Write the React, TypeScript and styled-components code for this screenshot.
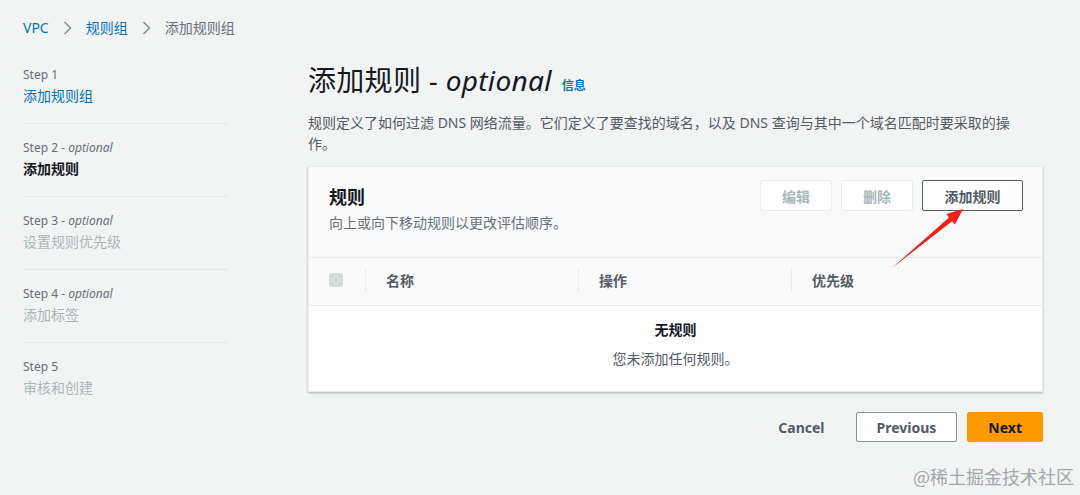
import styled, { createGlobalStyle } from "styled-components";

const GlobalStyle = createGlobalStyle`
    html, body {
        margin: 0;
        padding: 0;
        background: #f2f3f3;
    }
    body {
        font-family: "Noto Sans", "Noto Sans CJK SC", sans-serif;
        color: #16191f;
    }
    * {
        box-sizing: border-box;
    }
`;

const Page = styled.div`
    position: relative;
    width: 1080px;
    height: 495px;
    padding: 18px 0 0 23px;
    overflow: hidden;
`;

const Breadcrumbs = styled.nav`
    display: flex;
    align-items: center;
    gap: 14px;
    height: 20px;
    font-size: 14px;
    line-height: 20px;
`;

const Crumb = styled.span<{ $current?: boolean }>`
    color: ${(p) => (p.$current ? "#687078" : "#0073bb")};
`;

const Layout = styled.div`
    display: grid;
    grid-template-columns: 205px 735px;
    column-gap: 80px;
`;

const SideNav = styled.ul`
    list-style: none;
    margin: 29px 0 0;
    padding: 0;
`;

const NavItem = styled.li`
    padding: 0 0 17px;
    margin-bottom: 16px;
    border-bottom: 1px solid #e4e7e7;
    &:last-child {
        border-bottom: none;
    }
`;

const StepLabel = styled.div`
    font-size: 12px;
    line-height: 16px;
    color: #687078;
    em {
        font-style: italic;
    }
`;

const StepName = styled.div<{ $state: "done" | "active" | "disabled" }>`
    margin-top: 3px;
    font-size: 14px;
    line-height: 20px;
    font-weight: ${(p) => (p.$state === "active" ? 700 : 400)};
    color: ${(p) =>
        p.$state === "done"
            ? "#0073bb"
            : p.$state === "active"
            ? "#16191f"
            : "#aab7b8"};
`;

const Main = styled.main`
    padding-top: 24px;
`;

const Title = styled.h1`
    margin: 0;
    font-size: 28px;
    line-height: 36px;
    font-weight: 400;
    color: #16191f;
    letter-spacing: 0.3px;
    em {
        font-style: italic;
    }
`;

const InfoLink = styled.span`
    margin-left: 10px;
    font-size: 12px;
    font-weight: 700;
    color: #0073bb;
    letter-spacing: 0;
    vertical-align: 1px;
`;

const Description = styled.p`
    margin: 8px 0 0;
    max-width: 726px;
    font-size: 14px;
    line-height: 21px;
    color: #545b64;
`;

const Card = styled.section`
    margin-top: 12px;
    background: #fff;
    border: 1px solid #eaeded;
    box-shadow: 0 1px 2px rgba(0, 28, 36, 0.3);
`;

const CardHeader = styled.div`
    display: flex;
    justify-content: space-between;
    align-items: flex-start;
    padding: 13px 19px 24px 20px;
    background: #fafafa;
    border-bottom: 1px solid #eaeded;
`;

const CardTitle = styled.h2`
    margin: 5px 0 0;
    font-size: 18px;
    line-height: 24px;
    font-weight: 700;
    color: #16191f;
`;

const CardSubtitle = styled.div`
    margin-top: 4px;
    font-size: 14px;
    line-height: 20px;
    color: #687078;
`;

const Actions = styled.div`
    display: flex;
    gap: 9px;
`;

const Button = styled.button<{ $disabled?: boolean; $width: number }>`
    width: ${(p) => p.$width}px;
    height: 31px;
    padding: 0;
    border-radius: 2px;
    background: #fff;
    font-family: inherit;
    font-size: 14px;
    font-weight: 700;
    border: 1px solid ${(p) => (p.$disabled ? "#eaeded" : "#545b64")};
    color: ${(p) => (p.$disabled ? "#aab7b8" : "#545b64")};
`;

const TableHead = styled.div`
    display: grid;
    grid-template-columns: 56px 213px 213px 1fr;
    align-items: center;
    height: 48px;
    background: #fafafa;
    border-bottom: 1px solid #eaeded;
`;

const HeadCell = styled.div<{ $first?: boolean }>`
    position: relative;
    height: 100%;
    display: flex;
    align-items: center;
    padding: 0 0 3px ${(p) => (p.$first ? "20px" : "21px")};
    font-size: 14px;
    font-weight: 700;
    color: #545b64;
    &::before {
        content: "";
        display: ${(p) => (p.$first ? "none" : "block")};
        position: absolute;
        left: 0;
        top: 11px;
        bottom: 13px;
        width: 1px;
        background: #eaeded;
    }
`;

const Checkbox = styled.span`
    width: 14px;
    height: 14px;
    border-radius: 2px;
    background: #d5dbdb;
`;

const Empty = styled.div`
    display: flex;
    flex-direction: column;
    align-items: center;
    gap: 9px;
    padding: 14px 0 22px;
    font-size: 14px;
    line-height: 20px;
    color: #545b64;
    strong {
        font-weight: 700;
        color: #16191f;
    }
`;

const Footer = styled.div`
    display: flex;
    justify-content: flex-end;
    gap: 10px;
    margin-top: 20px;
`;

const FooterButton = styled.button<{ $variant: "link" | "normal" | "primary" }>`
    height: 30px;
    padding: 0 20px;
    border-radius: 2px;
    font-family: inherit;
    font-size: 14px;
    font-weight: 700;
    border: 1px solid
        ${(p) =>
            p.$variant === "link"
                ? "transparent"
                : p.$variant === "primary"
                ? "#ff9900"
                : "#879596"};
    background: ${(p) =>
        p.$variant === "link"
            ? "transparent"
            : p.$variant === "primary"
            ? "#ff9900"
            : "#fff"};
    color: ${(p) => (p.$variant === "primary" ? "#16191f" : "#545b64")};
`;

const Overlay = styled.svg`
    position: absolute;
    left: 0;
    top: 0;
    pointer-events: none;
`;

const Watermark = styled.div`
    position: absolute;
    right: 6px;
    bottom: 7px;
    font-family: "Noto Sans CJK SC", sans-serif;
    font-size: 18px;
    line-height: 24px;
    color: #a4a8ab;
`;

const chevron = (
    <svg width="9" height="14" viewBox="0 0 9 14">
        <polyline
            points="1.5,1 7.5,7 1.5,13"
            fill="none"
            stroke="#879596"
            strokeWidth="1.6"
        />
    </svg>
);

const steps = [
    { label: "Step 1", optional: false, name: "添加规则组", state: "done" },
    { label: "Step 2", optional: true, name: "添加规则", state: "active" },
    { label: "Step 3", optional: true, name: "设置规则优先级", state: "disabled" },
    { label: "Step 4", optional: true, name: "添加标签", state: "disabled" },
    { label: "Step 5", optional: false, name: "审核和创建", state: "disabled" },
] as const;

const App = () => {
    return (
        <>
            <GlobalStyle />
            <Page>
                <Breadcrumbs>
                    <Crumb>VPC</Crumb>
                    {chevron}
                    <Crumb>规则组</Crumb>
                    {chevron}
                    <Crumb $current>添加规则组</Crumb>
                </Breadcrumbs>
                <Layout>
                    <SideNav>
                        {steps.map((step) => (
                            <NavItem key={step.label}>
                                <StepLabel>
                                    {step.label}
                                    {step.optional && (
                                        <>
                                            {" - "}
                                            <em>optional</em>
                                        </>
                                    )}
                                </StepLabel>
                                <StepName $state={step.state}>{step.name}</StepName>
                            </NavItem>
                        ))}
                    </SideNav>
                    <Main>
                        <Title>
                            添加规则 - <em>optional</em>
                            <InfoLink>信息</InfoLink>
                        </Title>
                        <Description>
                            规则定义了如何过滤 DNS 网络流量。它们定义了要查找的域名，以及 DNS
                            查询与其中一个域名匹配时要采取的操作。
                        </Description>
                        <Card>
                            <CardHeader>
                                <div>
                                    <CardTitle>规则</CardTitle>
                                    <CardSubtitle>
                                        向上或向下移动规则以更改评估顺序。
                                    </CardSubtitle>
                                </div>
                                <Actions>
                                    <Button $disabled $width={72}>
                                        编辑
                                    </Button>
                                    <Button $disabled $width={72}>
                                        删除
                                    </Button>
                                    <Button $width={101}>添加规则</Button>
                                </Actions>
                            </CardHeader>
                            <TableHead>
                                <HeadCell $first>
                                    <Checkbox />
                                </HeadCell>
                                <HeadCell>名称</HeadCell>
                                <HeadCell>操作</HeadCell>
                                <HeadCell>优先级</HeadCell>
                            </TableHead>
                            <Empty>
                                <strong>无规则</strong>
                                <span>您未添加任何规则。</span>
                            </Empty>
                        </Card>
                        <Footer>
                            <FooterButton $variant="link">Cancel</FooterButton>
                            <FooterButton $variant="normal">Previous</FooterButton>
                            <FooterButton $variant="primary">Next</FooterButton>
                        </Footer>
                    </Main>
                </Layout>
                <Overlay width="1080" height="495" viewBox="0 0 1080 495">
                    <polygon
                        points="892,268 949,217.4 946.3,214 963,209 955,224.5 952.2,221.2"
                        fill="#f0201b"
                    />
                </Overlay>
                <Watermark>@稀土掘金技术社区</Watermark>
            </Page>
        </>
    );
};

export default App;
